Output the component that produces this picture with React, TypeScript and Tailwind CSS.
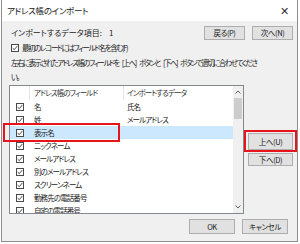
import React from 'react';

const fields = [
  { name: '名', data: '氏名' },
  { name: '姓', data: 'メールアドレス' },
  { name: '表示名', data: '', selected: true },
  { name: 'ニックネーム', data: '' },
  { name: 'メールアドレス', data: '' },
  { name: '別のメールアドレス', data: '' },
  { name: 'スクリーンネーム', data: '' },
  { name: '勤務先の電話番号', data: '' },
  { name: '自宅の電話番号', data: '' },
];

const Check: React.FC<{ className?: string }> = ({ className }) => (
  <span className={`w-[8px] h-[8px] border border-[#4a4a4a] bg-white flex items-center justify-center shrink-0 ${className ?? ''}`}>
    <svg width="6" height="6" viewBox="0 0 6 6">
      <path d="M0.6 3.1 L2.3 4.7 L5.4 0.9" fill="none" stroke="#3a3a3a" strokeWidth="0.9" />
    </svg>
  </span>
);

const Btn: React.FC<{ label: string; className?: string }> = ({ label, className }) => (
  <div className={`bg-[#e1e1e1] border border-[#adadad] flex items-center justify-center text-[7.5px] tracking-[-0.4px] ${className ?? ''}`}>
    {label}
  </div>
);

export default function App() {
  return (
    <div
      className="w-[300px] h-[244px] bg-white text-[#1a1a1a] text-[7.5px] tracking-[-0.9px] [font-feature-settings:'palt'] overflow-hidden"
      style={{ fontFamily: '"Noto Sans CJK JP", "Noto Sans", sans-serif' }}
    >
      <div className="relative ml-[1px] w-[297px] h-[242px] border-x border-b border-[#8e8e8e] bg-[#f0f0f0] flex flex-col">
        {/* title bar */}
        <div className="h-[21px] bg-white flex items-center justify-between pl-[5px] pr-[9px] shrink-0">
          <span className="text-[8.5px] tracking-[-0.3px]">アドレス帳のインポート</span>
          <span className="text-[11px] font-light leading-none text-[#333]">✕</span>
        </div>

        <div className="flex flex-col pl-[7px] pr-[4px] min-w-0">
          {/* import count + nav buttons */}
          <div className="flex items-center justify-between mt-[5px] h-[14px]">
            <span className="pl-[2px] text-[8px] tracking-normal">インポートするデータ項目:&nbsp;&nbsp;&nbsp;&nbsp;1</span>
            <div className="flex gap-[7px]">
              <Btn label="戻る(P)" className="w-[41px] h-[14px]" />
              <Btn label="次へ(N)" className="w-[41px] h-[14px]" />
            </div>
          </div>

          {/* first record checkbox */}
          <div className="flex items-center gap-[3px] h-[14px] mt-[1px] pl-[2px]">
            <Check />
            <span className="tracking-[-1.4px]">最初のレコードにはフィールド名を含む(F)</span>
          </div>

          {/* instructions */}
          <p className="pl-[2px] leading-[14px] mt-[1px] tracking-[-1.55px] [word-spacing:3px] whitespace-nowrap">
            左右に表示されたアドレス帳のフィールドを [上へ] ボタンと [下へ] ボタンで適切に合わせてくださ
            <br />
            い。
          </p>

          {/* list + move buttons */}
          <div className="flex mt-[1px]">
            <div className="w-[236px] h-[129px] border border-[#828790] bg-white flex overflow-hidden">
              <div className="flex-1 flex flex-col">
                <div className="h-[14px] flex items-center shrink-0 text-[#333]">
                  <span className="w-[20px] h-full border-r border-[#e5e5e5]" />
                  <span className="w-[94px] h-full flex items-center pl-[4px] border-r border-[#e5e5e5]">アドレス帳のフィールド</span>
                  <span className="pl-[3px]">インポートするデータ</span>
                </div>
                {fields.map((f) => (
                  <div
                    key={f.name}
                    className={`h-[13px] flex items-center shrink-0 ${f.selected ? 'bg-[#cce8ff]' : ''}`}
                  >
                    <span className="w-[20px] flex justify-center">
                      <Check />
                    </span>
                    <span className="w-[94px] pl-[4px]">{f.name}</span>
                    <span className="pl-[3px]">{f.data}</span>
                  </div>
                ))}
              </div>
              {/* scrollbar */}
              <div className="w-[10px] bg-[#f0f0f0] flex flex-col items-center shrink-0">
                <div className="h-[12px] flex items-center justify-center">
                  <svg width="6" height="4" viewBox="0 0 6 4">
                    <path d="M0.5 3.5 L3 1 L5.5 3.5" fill="none" stroke="#606060" strokeWidth="1" />
                  </svg>
                </div>
                <div className="w-[8px] h-[21px] bg-[#cdcdcd]" />
                <div className="flex-1" />
                <div className="h-[12px] flex items-center justify-center">
                  <svg width="6" height="4" viewBox="0 0 6 4">
                    <path d="M0.5 0.5 L3 3 L5.5 0.5" fill="none" stroke="#606060" strokeWidth="1" />
                  </svg>
                </div>
              </div>
            </div>
            <div className="flex flex-col gap-[3px] ml-[4px] mt-[48px]">
              <Btn label="上へ(U)" className="w-[45px] h-[17px]" />
              <Btn label="下へ(D)" className="w-[45px] h-[13px]" />
            </div>
          </div>

          {/* OK / cancel */}
          <div className="flex justify-end gap-[7px] mt-[5px] pr-[5px]">
            <Btn label="OK" className="w-[46px] h-[15px]" />
            <Btn label="キャンセル" className="w-[46px] h-[15px]" />
          </div>
        </div>

        {/* red highlight overlays */}
        <div className="absolute left-[1px] top-[123px] w-[117px] h-[19px] border-2 border-[#e8141c]" />
        <div className="absolute left-[242px] top-[130px] w-[53px] h-[22px] border-2 border-[#e8141c]" />
      </div>
    </div>
  );
}
